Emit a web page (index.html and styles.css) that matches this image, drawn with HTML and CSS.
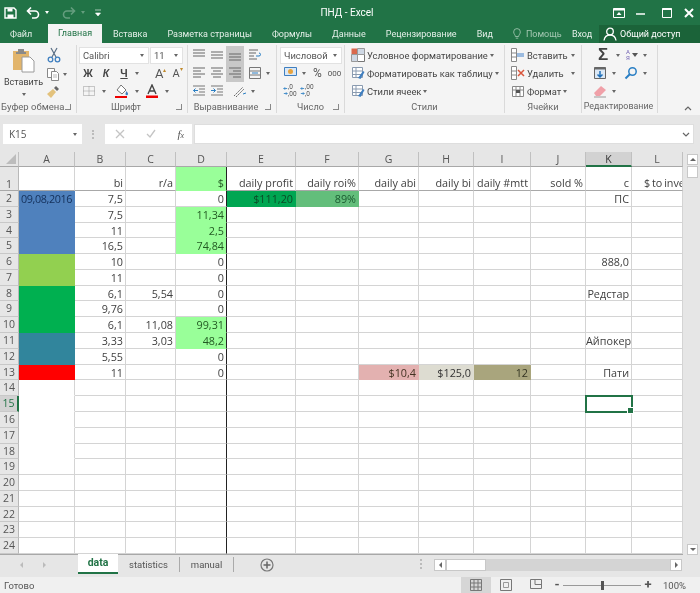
FILE: index.html
```html
<!DOCTYPE html>
<html lang="ru">
<head>
<meta charset="utf-8">
<title>ПНД - Excel</title>
<link rel="stylesheet" href="styles.css">
</head>
<body>
<svg class="sprite" width="0" height="0">
  <symbol id="al-t" viewBox="0 0 14 14"><path d="M1 2h12M1 5h12M1 8h12" stroke="#666"/></symbol>
  <symbol id="al-m" viewBox="0 0 14 14"><path d="M1 4h12M1 7h12M1 10h12" stroke="#666"/></symbol>
  <symbol id="al-b" viewBox="0 0 14 14"><path d="M1 6h12M1 9h12M1 12h12" stroke="#666"/></symbol>
  <symbol id="al-l" viewBox="0 0 14 14"><path d="M1 2h12M1 5h8M1 8h12M1 11h8" stroke="#666"/></symbol>
  <symbol id="al-c" viewBox="0 0 14 14"><path d="M1 2h12M3 5h8M1 8h12M3 11h8" stroke="#666"/></symbol>
  <symbol id="al-r" viewBox="0 0 14 14"><path d="M1 2h12M5 5h8M1 8h12M5 11h8" stroke="#666"/></symbol>
  <symbol id="ind" viewBox="0 0 14 14"><path d="M1 2h12M7 5h6M7 8h6M1 11h12" stroke="#777"/><path d="M6 6.500H1.500M3.500 4.500l-2 2 2 2" stroke="#2a7fc4" fill="none"/></symbol>
  <symbol id="out" viewBox="0 0 14 14"><path d="M1 2h12M7 5h6M7 8h6M1 11h12" stroke="#777"/><path d="M1 6.500h4.500M3.500 4.500l2 2-2 2" stroke="#2a7fc4" fill="none"/></symbol>
  <symbol id="brush" viewBox="0 0 14 14"><path d="M1.500 1.500h10v10h-10zM1.500 5h10M1.500 8.500h10M5 1.500v10" fill="#fff" stroke="#8a9bb0"/><path d="M7 12l5-7 1.500 1-4 7z" fill="#3f7fc0"/></symbol>
  <symbol id="decarrow" viewBox="0 0 6 12"><path d="M5 3H1M2.500 1.500 1 3l1.500 1.500M1 9h4M3.500 7.500 5 9l-1.500 1.500" fill="none" stroke="#2a7fc4"/></symbol>
</svg>
<div class="app">
  <header class="title">
    <div class="qat">
      <svg class="ic16" viewBox="0 0 16 16"><path d="M3 3h9l2 2v8H3z" fill="none" stroke="#fff" stroke-width="1.400"/><path d="M5.500 3.500h5v3h-5zM5.500 9.500h6V13h-6z" fill="#fff"/></svg>
      <svg class="ic16" viewBox="0 0 16 16"><path d="M3 6h7a3.500 3.500 0 0 1 0 7H7M6 2.500 2.500 6 6 9.500" fill="none" stroke="#fff" stroke-width="1.600"/></svg>
      <span class="car w"></span>
      <svg class="ic16 dim" viewBox="0 0 16 16"><path d="M13 6H6a3.500 3.500 0 0 0 0 7h3M10 2.500 13.500 6 10 9.500" fill="none" stroke="#fff" stroke-width="1.600"/></svg>
      <span class="car w dim"></span>
      <svg class="qm" viewBox="0 0 8 8"><path d="M1 1h6M1.500 4h5L4 7z" fill="#fff" stroke="#fff" stroke-width=".6"/></svg>
    </div>
    <div class="doc">ПНД - Excel</div>
    <div class="win">
      <svg class="ic14" viewBox="0 0 14 14"><path d="M1.500 2.500h11v9h-11z" fill="none" stroke="#fff"/><path d="M1.500 2.500h11v2h-11zM7 6l2.500 3h-5z" fill="#fff"/></svg>
      <svg class="ic14" viewBox="0 0 14 14"><path d="M2 8h9" stroke="#fff" stroke-width="1.500"/></svg>
      <svg class="ic14" viewBox="0 0 14 14"><path d="M2.500 2.500h9v9h-9z" fill="none" stroke="#fff"/><path d="M2.500 3h9" stroke="#fff" stroke-width="2"/></svg>
      <svg class="ic14" viewBox="0 0 14 14"><path d="M3 3l8 8M11 3l-8 8" stroke="#fff" stroke-width="2"/></svg>
    </div>
  </header>

  <nav class="tabs">
    <span class="tab file">Файл</span>
    <span class="tab active">Главная</span>
    <span class="tab ins">Вставка</span>
    <span class="tab">Разметка страницы</span>
    <span class="tab">Формулы</span>
    <span class="tab">Данные</span>
    <span class="tab">Рецензирование</span>
    <span class="tab">Вид</span>
    <span class="tab help">
      <svg class="bulb" viewBox="0 0 12 14"><path d="M4 10c0-2-2-3-2-5.500a4 4 0 0 1 8 0C10 7 8 8 8 10zM4.500 12h3" fill="none" stroke="#a5c8b3"/></svg>
      Помощь
    </span>
    <span class="tab login">Вход</span>
    <span class="share">
      <svg class="ic14" viewBox="0 0 14 14"><circle cx="7" cy="4.500" r="3.300" fill="none" stroke="#fff" stroke-width="1.300"/><path d="M1 13.500c.5-3.500 3-5.500 6-5.500s5.500 2 6 5.500" fill="none" stroke="#fff" stroke-width="1.300"/></svg>
      Общий доступ
    </span>
  </nav>

  <section class="ribbon">
    <div class="grp g-clip">
      <div class="body clip">
        <div class="paste">
          <svg class="pasteic" viewBox="0 0 24 25"><path d="M1 3h16v19H1z" fill="#e2b56c"/><path d="M6 1h6v3h2v2H4V4h2z" fill="#8a8a8a"/><path d="M10 9h8l4 4v11H10z" fill="#fff" stroke="#9a9a9a"/></svg>
          <span class="pt">Вставить</span>
          <span class="car"></span>
        </div>
        <div class="clipcol">
          <svg class="ic16" viewBox="0 0 16 16"><path d="M5 1l5 9M11 1L6 10" stroke="#5a6f86" stroke-width="1.200"/><circle cx="4.500" cy="12.500" r="2.300" fill="none" stroke="#3f7fc0" stroke-width="1.300"/><circle cx="11.500" cy="12.500" r="2.300" fill="none" stroke="#3f7fc0" stroke-width="1.300"/></svg>
          <div class="it"><svg class="ic14" viewBox="0 0 14 14"><path d="M1.500 1.500h7v9h-7z" fill="#fff" stroke="#888"/><path d="M5.500 4.500h5l2 2v7h-7z" fill="#fff" stroke="#888"/><path d="M7 8h4M7 10h4" stroke="#bbb"/></svg><span class="car"></span></div>
          <svg class="ic14" viewBox="0 0 14 14"><path d="M1 9l6-5 3 3-5 6z" fill="#e3c27c"/><path d="M8 3l2-2 3 3-2 2z" fill="#666"/></svg>
        </div>
      </div>
      <div class="lab">Буфер обмена<span class="launch"></span></div>
    </div>

    <div class="grp g-font">
      <div class="body stack">
        <div class="tr">
          <span class="combo fname">Calibri<span class="car"></span></span>
          <span class="combo fsize">11<span class="car"></span></span>
        </div>
        <div class="tr t2">
          <b class="fb">Ж</b><b class="fb it2">К</b><b class="fb un">Ч</b><span class="car"></span>
          <span class="grow">A<sup>▴</sup></span><span class="shrink">A<sup>▾</sup></span>
        </div>
        <div class="tr t3">
          <svg class="ic14" viewBox="0 0 14 14"><path d="M1.500 2.500h11v9h-11zM7 2.500v9M1.500 7h11" fill="none" stroke="#999" stroke-dasharray="1 1"/></svg><span class="car"></span>
          <svg class="ic14 fill" viewBox="0 0 14 14"><path d="M6 1l5 5-4 4-5-4z" fill="#fff" stroke="#777"/><path d="M11.500 7c1 1.500 1.500 2 1.500 3a1.200 1.200 0 0 1-2.500 0c0-1 .5-1.500 1-3z" fill="#3f7fc0"/><path d="M0 12h12v2H0z" fill="#e00"/></svg><span class="car"></span>
          <svg class="ic14 fa" viewBox="0 0 14 14"><path d="M3 10 7 1l4 9M4.500 7h5" fill="none" stroke="#444" stroke-width="1.400"/><path d="M1 11.500h12V14H1z" fill="#e00"/></svg><span class="car"></span>
        </div>
      </div>
      <div class="lab pad">Шрифт<span class="launch"></span></div>
    </div>

    <div class="grp g-align">
      <div class="body stack">
        <div class="tr ar">
          <span class="ab"><svg class="ic14"><use href="#al-t"/></svg></span>
          <span class="ab"><svg class="ic14"><use href="#al-m"/></svg></span>
          <span class="ab on"><svg class="ic14"><use href="#al-b"/></svg></span>
          <span class="ab wr"><svg class="ic14" viewBox="0 0 14 14"><path d="M1 2h9M1 5h7M1 8h5M1 11h8" stroke="#666"/><path d="M8 8h3a1.500 1.500 0 0 0 0-3" fill="none" stroke="#2a7fc4"/></svg></span>
        </div>
        <div class="tr ar">
          <span class="ab"><svg class="ic14"><use href="#al-l"/></svg></span>
          <span class="ab"><svg class="ic14"><use href="#al-c"/></svg></span>
          <span class="ab on"><svg class="ic14"><use href="#al-r"/></svg></span>
          <span class="ab wr"><svg class="ic14" viewBox="0 0 14 14"><path d="M1.500 1.500h11v11h-11zM1.500 5h11M1.500 9h11" fill="none" stroke="#777"/><path d="M4 7h6" stroke="#2a7fc4"/></svg></span><span class="car"></span>
        </div>
        <div class="tr ar">
          <span class="ab"><svg class="ic14"><use href="#ind"/></svg></span>
          <span class="ab"><svg class="ic14"><use href="#out"/></svg></span>
          <span class="ab orient"><svg class="ic14" viewBox="0 0 14 14"><path d="M1 12 10 3M3 13l8-8" stroke="#666" stroke-dasharray="2 1"/><path d="M10 10l3-1" stroke="#2a7fc4"/></svg></span><span class="car"></span>
        </div>
      </div>
      <div class="lab pad">Выравнивание<span class="launch"></span></div>
    </div>

    <div class="grp g-num">
      <div class="body stack">
        <div class="tr"><span class="combo fmt">Числовой<span class="car"></span></span></div>
        <div class="tr n2">
          <svg class="ic16" viewBox="0 0 16 16"><path d="M1.500 2.500h12v8h-12z" fill="#dbe8f5" stroke="#3f7fc0"/><circle cx="7.500" cy="6.500" r="2.500" fill="#e8a33d"/></svg><span class="car"></span>
          <span class="pct">%</span><span class="thou">000</span>
        </div>
        <div class="tr n3">
          <span class="dec"><svg class="da"><use href="#decarrow"/></svg><span class="dt">,0<br>,00</span></span>
          <span class="dec"><svg class="da"><use href="#decarrow"/></svg><span class="dt">,00<br>,0</span></span>
        </div>
      </div>
      <div class="lab">Число<span class="launch"></span></div>
    </div>

    <div class="grp g-sty">
      <div class="body stack">
        <div class="tr st"><svg class="ic14" viewBox="0 0 14 14"><path d="M.5.500h6v6h-6z" fill="#d9684c"/><path d="M6.500 6.500h7v7h-7z" fill="#fff" stroke="#777"/><path d="M.5 6.500h6v7h-6zM6.500.5h7v6h-7z" fill="#cfd8e4" stroke="#999"/></svg>Условное форматирование<span class="car"></span></div>
        <div class="tr st"><svg class="ic14"><use href="#brush"/></svg>Форматировать как таблицу<span class="car"></span></div>
        <div class="tr st"><svg class="ic14"><use href="#brush"/></svg>Стили ячеек<span class="car"></span></div>
      </div>
      <div class="lab">Стили</div>
    </div>

    <div class="grp g-cell">
      <div class="body stack">
        <div class="tr st"><svg class="ic14" viewBox="0 0 14 14"><path d="M.5.500h5v13h-5zM.5 5h5M.5 9h5" fill="#fff" stroke="#888"/><path d="M6 5h7v4H6z" fill="#9bbbe0"/></svg>Вставить<span class="car far"></span></div>
        <div class="tr st"><svg class="ic14" viewBox="0 0 14 14"><path d="M.5.500h5v13h-5zM.5 5h5M.5 9h5" fill="#fff" stroke="#888"/><path d="M7 4l6 6M13 4l-6 6" stroke="#d9553b" stroke-width="1.500"/></svg>Удалить<span class="car far"></span></div>
        <div class="tr st"><svg class="ic14" viewBox="0 0 14 14"><path d="M1.500 2.500h11v10h-11zM1.500 6h11M5 2.500v10M9 2.500v10" fill="#fff" stroke="#888"/><path d="M5 6h4v3H5z" fill="#555"/></svg>Формат<span class="car"></span></div>
      </div>
      <div class="lab">Ячейки</div>
    </div>

    <div class="grp g-edit">
      <div class="body stack">
        <div class="tr ed"><span class="sig">Σ</span><span class="car"></span><span class="az">А<br>Я</span><svg class="sort" viewBox="0 0 6 4"><path d="M0 0h6L3 4z" fill="#555"/></svg><span class="car"></span></div>
        <div class="tr ed"><svg class="ic14" viewBox="0 0 14 14"><path d="M1.500 1.500h11v11h-11z" fill="#dbe8f5" stroke="#666"/><path d="M1.500 1.500h11v2h-11z" fill="#666"/><path d="M7 5v6M4.500 8.500 7 11l2.500-2.500" fill="none" stroke="#1f6fb8" stroke-width="1.500"/></svg><span class="car"></span><svg class="ic14 find" viewBox="0 0 14 14"><circle cx="8.500" cy="5.500" r="3.700" fill="none" stroke="#2a7fc4" stroke-width="1.500"/><path d="M6 8l-4.500 4.500" stroke="#2a7fc4" stroke-width="2"/></svg><span class="car"></span></div>
        <div class="tr ed"><svg class="ic14" viewBox="0 0 14 14"><path d="M1 9l7-7 5 4-6 6H3z" fill="#f0a0a8"/><path d="M1 13h12" stroke="#999"/></svg><span class="car"></span></div>
      </div>
      <div class="lab tight">Редактирование</div>
    </div>

    <div class="collapse"><svg class="ch8" viewBox="0 0 8 5"><path d="M1 4l3-3 3 3" fill="none" stroke="#666" stroke-width="1.200"/></svg></div>
  </section>

  <section class="fbar">
    <div class="namebox">K15<span class="car"></span></div>
    <div class="dots"></div>
    <div class="fbtns">
      <svg class="ic10" viewBox="0 0 10 10"><path d="M1 1l8 8M9 1 1 9" stroke="#c4c4c4" stroke-width="1.300"/></svg>
      <svg class="ic10" viewBox="0 0 10 10"><path d="M1 5l3 3 5-7" fill="none" stroke="#c4c4c4" stroke-width="1.300"/></svg>
      <i class="fx">f<small>x</small></i>
    </div>
    <div class="finput"><svg class="ch8" viewBox="0 0 8 5"><path d="M1 1l3 3 3-3" fill="none" stroke="#666" stroke-width="1.200"/></svg></div>
  </section>

  <section class="sheetwrap">
    <div class="sheet">
      <div class="row heads"><div class="corner"><span class="tri"></span></div><div class="ch">A</div><div class="ch">B</div><div class="ch">C</div><div class="ch">D</div><div class="ch">E</div><div class="ch">F</div><div class="ch">G</div><div class="ch">H</div><div class="ch">I</div><div class="ch">J</div><div class="ch on">K</div><div class="ch">L</div></div>
      <div class="row r1"><div class="rh">1</div><div class="c"></div><div class="c">bi</div><div class="c">r/a</div><div class="c d gr">$</div><div class="c">daily profit</div><div class="c">daily roi%</div><div class="c">daily abi</div><div class="c">daily bi</div><div class="c">daily #mtt</div><div class="c">sold %</div><div class="c">с</div><div class="c lft">$ to invest</div></div>
      <div class="row"><div class="rh">2</div><div class="c blue ctr">09,08,2016</div><div class="c">7,5</div><div class="c"></div><div class="c d">0</div><div class="c e2">$111,20</div><div class="c f2">89%</div><div class="c"></div><div class="c"></div><div class="c"></div><div class="c"></div><div class="c">ПС</div><div class="c"></div></div>
      <div class="row"><div class="rh">3</div><div class="c blue"></div><div class="c">7,5</div><div class="c"></div><div class="c d gr">11,34</div><div class="c"></div><div class="c"></div><div class="c"></div><div class="c"></div><div class="c"></div><div class="c"></div><div class="c"></div><div class="c"></div></div>
      <div class="row"><div class="rh">4</div><div class="c blue"></div><div class="c">11</div><div class="c"></div><div class="c d gr">2,5</div><div class="c"></div><div class="c"></div><div class="c"></div><div class="c"></div><div class="c"></div><div class="c"></div><div class="c"></div><div class="c"></div></div>
      <div class="row"><div class="rh">5</div><div class="c blue"></div><div class="c">16,5</div><div class="c"></div><div class="c d gr">74,84</div><div class="c"></div><div class="c"></div><div class="c"></div><div class="c"></div><div class="c"></div><div class="c"></div><div class="c"></div><div class="c"></div></div>
      <div class="row"><div class="rh">6</div><div class="c lime"></div><div class="c">10</div><div class="c"></div><div class="c d">0</div><div class="c"></div><div class="c"></div><div class="c"></div><div class="c"></div><div class="c"></div><div class="c"></div><div class="c">888,0</div><div class="c"></div></div>
      <div class="row"><div class="rh">7</div><div class="c lime"></div><div class="c">11</div><div class="c"></div><div class="c d">0</div><div class="c"></div><div class="c"></div><div class="c"></div><div class="c"></div><div class="c"></div><div class="c"></div><div class="c"></div><div class="c"></div></div>
      <div class="row"><div class="rh">8</div><div class="c green"></div><div class="c">6,1</div><div class="c">5,54</div><div class="c d">0</div><div class="c"></div><div class="c"></div><div class="c"></div><div class="c"></div><div class="c"></div><div class="c"></div><div class="c">Редстар</div><div class="c"></div></div>
      <div class="row"><div class="rh">9</div><div class="c green"></div><div class="c">9,76</div><div class="c"></div><div class="c d">0</div><div class="c"></div><div class="c"></div><div class="c"></div><div class="c"></div><div class="c"></div><div class="c"></div><div class="c"></div><div class="c"></div></div>
      <div class="row"><div class="rh">10</div><div class="c green"></div><div class="c">6,1</div><div class="c">11,08</div><div class="c d gr">99,31</div><div class="c"></div><div class="c"></div><div class="c"></div><div class="c"></div><div class="c"></div><div class="c"></div><div class="c"></div><div class="c"></div></div>
      <div class="row"><div class="rh">11</div><div class="c teal"></div><div class="c">3,33</div><div class="c">3,03</div><div class="c d gr">48,2</div><div class="c"></div><div class="c"></div><div class="c"></div><div class="c"></div><div class="c"></div><div class="c"></div><div class="c">Айпокер</div><div class="c"></div></div>
      <div class="row"><div class="rh">12</div><div class="c teal"></div><div class="c">5,55</div><div class="c"></div><div class="c d">0</div><div class="c"></div><div class="c"></div><div class="c"></div><div class="c"></div><div class="c"></div><div class="c"></div><div class="c"></div><div class="c"></div></div>
      <div class="row"><div class="rh">13</div><div class="c red"></div><div class="c">11</div><div class="c"></div><div class="c d">0</div><div class="c"></div><div class="c"></div><div class="c g13">$10,4</div><div class="c h13">$125,0</div><div class="c i13">12</div><div class="c"></div><div class="c">Пати</div><div class="c"></div></div>
      <div class="row"><div class="rh">14</div><div class="c nb"></div><div class="c"></div><div class="c"></div><div class="c d"></div><div class="c"></div><div class="c"></div><div class="c"></div><div class="c"></div><div class="c"></div><div class="c"></div><div class="c"></div><div class="c"></div></div>
      <div class="row"><div class="rh on">15</div><div class="c nb"></div><div class="c"></div><div class="c"></div><div class="c d"></div><div class="c"></div><div class="c"></div><div class="c"></div><div class="c"></div><div class="c"></div><div class="c"></div><div class="c sel"></div><div class="c"></div></div>
      <div class="row"><div class="rh">16</div><div class="c nb"></div><div class="c"></div><div class="c"></div><div class="c d"></div><div class="c"></div><div class="c"></div><div class="c"></div><div class="c"></div><div class="c"></div><div class="c"></div><div class="c"></div><div class="c"></div></div>
      <div class="row"><div class="rh">17</div><div class="c nb"></div><div class="c"></div><div class="c"></div><div class="c d"></div><div class="c"></div><div class="c"></div><div class="c"></div><div class="c"></div><div class="c"></div><div class="c"></div><div class="c"></div><div class="c"></div></div>
      <div class="row"><div class="rh">18</div><div class="c nb"></div><div class="c"></div><div class="c"></div><div class="c d"></div><div class="c"></div><div class="c"></div><div class="c"></div><div class="c"></div><div class="c"></div><div class="c"></div><div class="c"></div><div class="c"></div></div>
      <div class="row"><div class="rh">19</div><div class="c"></div><div class="c"></div><div class="c"></div><div class="c d"></div><div class="c"></div><div class="c"></div><div class="c"></div><div class="c"></div><div class="c"></div><div class="c"></div><div class="c"></div><div class="c"></div></div>
      <div class="row"><div class="rh">20</div><div class="c"></div><div class="c"></div><div class="c"></div><div class="c d"></div><div class="c"></div><div class="c"></div><div class="c"></div><div class="c"></div><div class="c"></div><div class="c"></div><div class="c"></div><div class="c"></div></div>
      <div class="row"><div class="rh">21</div><div class="c"></div><div class="c"></div><div class="c"></div><div class="c d"></div><div class="c"></div><div class="c"></div><div class="c"></div><div class="c"></div><div class="c"></div><div class="c"></div><div class="c"></div><div class="c"></div></div>
      <div class="row"><div class="rh">22</div><div class="c"></div><div class="c"></div><div class="c"></div><div class="c d"></div><div class="c"></div><div class="c"></div><div class="c"></div><div class="c"></div><div class="c"></div><div class="c"></div><div class="c"></div><div class="c"></div></div>
      <div class="row"><div class="rh">23</div><div class="c"></div><div class="c"></div><div class="c"></div><div class="c d"></div><div class="c"></div><div class="c"></div><div class="c"></div><div class="c"></div><div class="c"></div><div class="c"></div><div class="c"></div><div class="c"></div></div>
      <div class="row"><div class="rh">24</div><div class="c"></div><div class="c"></div><div class="c"></div><div class="c d"></div><div class="c"></div><div class="c"></div><div class="c"></div><div class="c"></div><div class="c"></div><div class="c"></div><div class="c"></div><div class="c"></div></div>
    </div>
    <div class="vscroll">
      <span class="sbtn"><span class="up"></span></span>
      <span class="vthumb"></span>
      <span class="vtrack"></span>
      <span class="sbtn"><span class="dn"></span></span>
    </div>
  </section>

  <section class="sheets">
    <div class="nav"><span class="lt"></span><span class="rt"></span></div>
    <span class="stab cur">data</span>
    <span class="stab sep">statistics</span>
    <span class="stab sep">manual</span>
    <svg class="plus" viewBox="0 0 14 14"><circle cx="7" cy="7" r="6" fill="none" stroke="#777" stroke-width="1.200"/><path d="M7 3.500v7M3.500 7h7" stroke="#666" stroke-width="1.500"/></svg>
    <div class="hdots"></div>
    <div class="hscroll">
      <span class="hbtn"><span class="lt"></span></span>
      <span class="hthumb"></span>
      <span class="htrack"></span>
      <span class="hbtn"><span class="rt"></span></span>
    </div>
  </section>

  <footer class="status">
    <span class="ready">Готово</span>
    <div class="views">
      <span class="vbtn on"><svg class="ic14" viewBox="0 0 14 14"><path d="M1.500 1.500h11v11h-11zM1.500 5h11M1.500 9h11M5 1.500v11M9 1.500v11" fill="none" stroke="#777"/></svg></span>
      <span class="vbtn"><svg class="ic14" viewBox="0 0 14 14"><path d="M1.500 1.500h11v11h-11z" fill="none" stroke="#777"/><path d="M4.500 4.500h5v5h-5z" fill="none" stroke="#999"/></svg></span>
      <span class="vbtn"><svg class="ic14" viewBox="0 0 14 14"><path d="M1.500 1.500h11v9h-11zM6 1.500v5h6.500" fill="none" stroke="#777"/></svg></span>
    </div>
    <div class="zoom">
      <span class="zb">-</span>
      <span class="slider"><span class="knob"></span></span>
      <span class="zb">+</span>
      <span class="zp">100%</span>
    </div>
  </footer>
</div>
</body>
</html>
```

FILE: styles.css
```css
* { box-sizing: border-box; }
html, body { margin: 0; padding: 0; }
body { width: 700px; height: 593px; overflow: hidden; font-family: "Open Sans", "Noto Sans", sans-serif; background: #fff; }
.sprite { display: block; width: 0; height: 0; }
.app { display: flex; flex-direction: column; width: 700px; height: 593px; filter: blur(.3px); }

svg { display: block; flex: none; }
.ic16 { width: 16px; height: 16px; }
.ic14 { width: 14px; height: 14px; }
.ic10 { width: 10px; height: 10px; }
.ch8 { width: 8px; height: 5px; }

.car { flex: none; width: 0; height: 0; border-left: 2.5px solid transparent; border-right: 2.5px solid transparent; border-top: 3px solid #666; }
.car.w { border-top-color: #fff; }
.dim { opacity: .3; }

/* title bar */
.title { display: flex; align-items: center; height: 25px; background: #217346; color: #fff; flex: none; }
.qat { display: flex; align-items: center; width: 292px; padding-left: 2px; }
.qat .ic16:nth-child(2) { margin-left: 7px; }
.qat .car { margin-left: 4px; }
.qat .ic16:nth-child(4) { margin-left: 12px; }
.qm { width: 8px; height: 8px; margin-left: 9px; }
.doc { width: 110px; text-align: center; font: 10px "Roboto", sans-serif; }
.win { display: flex; align-items: center; margin-left: 210px; }
.win .ic14:nth-child(2) { margin-left: 8px; }
.win .ic14:nth-child(3) { margin-left: 12px; }
.win .ic14:nth-child(4) { margin-left: 8px; }

/* tabs */
.tabs { display: flex; align-items: stretch; height: 18px; background: #217346; color: #e4efe8; font: 9px/18px "Roboto", sans-serif; flex: none; white-space: nowrap; }
.tab { flex: none; padding: 0 10px; }
.tab.file { padding: 0 0 0 10px; width: 48px; }
.tab.active { background: #f4f4f4; color: #217346; width: 54px; padding: 0; text-align: center; margin-top: -1px; height: 19px; }
.tab.ins { margin-left: 1px; }
.tab.help { display: flex; align-items: center; gap: 4px; color: #a5c8b3; width: 60px; padding: 0 0 0 9px; overflow: hidden; }
.bulb { width: 10px; height: 12px; }
.tab.login { padding: 0 7px 0 9px; }
.share { display: flex; align-items: center; gap: 3px; flex: 1; background: #1b6339; color: #fff; padding-left: 4px; overflow: hidden; }

/* ribbon */
.ribbon { display: flex; height: 72px; background: #f4f4f4; flex: none; color: #444; font: 9.400px "Roboto", "Noto Sans", sans-serif; }
.grp { display: flex; flex-direction: column; border-right: 1px solid #dadada; margin: 2px 0; flex: none; }
.body { height: 55px; }
.lab { height: 13px; line-height: 13px; text-align: center; font-size: 9.200px; color: #666; position: relative; white-space: nowrap; }
.lab.pad { padding-right: 12px; }
.lab.tight { font-size: 8.900px; padding-right: 2px; }
.launch { position: absolute; right: 5px; top: 4px; width: 6px; height: 6px; border-right: 1px solid #888; border-bottom: 1px solid #888; }
.g-clip { width: 77px; }
.g-font { width: 111px; }
.g-align { width: 89px; }
.g-num { width: 68px; }
.g-sty { width: 160px; }
.g-cell { width: 77px; }
.g-edit { width: 76px; }
.g-clip .lab { text-align: left; padding-left: 1px; font-size: 9.500px; }

.clip { display: flex; }
.paste { display: flex; flex-direction: column; align-items: center; width: 46px; padding: 3px 0 0 1px; }
.pasteic { width: 24px; height: 25px; }
.pt { font-size: 9px; line-height: 12px; margin-top: 3px; white-space: nowrap; }
.paste .car { margin-top: 5px; }
.clipcol { display: flex; flex-direction: column; gap: 4px; padding-top: 2px; }
.it { display: flex; align-items: center; gap: 3px; }

.stack { display: flex; flex-direction: column; padding-top: 1px; }
.tr { display: flex; align-items: center; height: 18px; flex: none; }
.combo { display: flex; align-items: center; justify-content: space-between; height: 17px; background: #fff; border: 1px solid #e2e2e2; padding: 0 4px 0 3px; color: #555; }
.fname { width: 70px; margin-left: 2px; }
.fsize { width: 33px; margin-left: 1px; }
.fmt { width: 62px; margin-left: 3px; }

.t2 { padding-left: 2px; }
.fb { width: 18px; text-align: center; font-size: 10.500px; color: #444; font-family: "Liberation Sans", sans-serif; }
.it2 { font-style: italic; }
.un { text-decoration: underline; }
.t2 .car { margin-left: 2px; }
.grow { margin-left: 16px; font-size: 13px; color: #555; }
.shrink { margin-left: 6px; font-size: 11px; color: #555; }
.grow sup, .shrink sup { font-size: 6px; vertical-align: 6px; line-height: 0; color: #c08a2d; }
.t3 { padding-left: 5px; }
.t3 .car { margin: 0 6px 0 6px; }
.t3 .fill { margin-left: 3px; }

.ar { padding-left: 2px; }
.ab { display: flex; align-items: center; justify-content: center; width: 18px; height: 18px; }
.ab.on { background: #c8c8c8; }
.ab.wr { margin-left: 2px; }
.ab.orient { margin-left: 5px; }
.ar .car { margin-left: 2px; }

.n2 { padding-left: 6px; }
.n2 .car { margin-left: 3px; }
.pct { margin-left: 7px; font-size: 12px; color: #555; }
.thou { margin-left: 6px; font-size: 8px; color: #555; }
.n3 { padding-left: 6px; gap: 3px; }
.dec { display: flex; align-items: center; width: 14px; }
.da { width: 5px; height: 14px; }
.dt { font-size: 6.500px; line-height: 7px; color: #555; }

.st { padding-left: 6px; gap: 2px; white-space: nowrap; color: #444; }
.g-cell .st { padding-right: 6px; }
.far { margin-left: auto; }
.ed { padding-left: 11px; gap: 5px; }
.sig { width: 16px; font: bold 17px/18px "Liberation Sans", sans-serif; color: #444; text-align: center; margin-left: 2px; }
.az { font-size: 6px; line-height: 6px; color: #7464b5; width: 5px; margin-left: 1px; }
.sort { width: 6px; height: 4px; margin-left: -4px; }
.ed .find { margin-left: 3px; }
.collapse { display: flex; align-items: flex-end; padding: 0 8px 4px 26px; }

/* formula bar */
.fbar { display: flex; align-items: center; height: 37px; background: #e6e6e6; padding: 1px 6px 0 3px; flex: none; }
.namebox { display: flex; align-items: center; justify-content: space-between; width: 79px; height: 20px; background: #fff; padding: 0 5px 0 6px; font-size: 10px; color: #555; }
.dots { width: 3px; height: 9px; margin: 0 10px 0 10px; border-left: 2px dotted #bbb; }
.fbtns { display: flex; align-items: center; justify-content: space-between; width: 87px; height: 20px; background: #fff; padding: 0 8px 0 10px; }
.fx { font: italic 11px "Liberation Serif", serif; color: #555; }
.fx small { font-size: 8px; }
.finput { display: flex; align-items: center; justify-content: flex-end; flex: 1; height: 20px; background: #fff; margin-left: 2px; padding-right: 3px; border: 1px solid #dedede; }

/* sheet */
.sheetwrap { display: flex; height: 403px; flex: none; }
.sheet { width: 683px; background: #fff; border-bottom: 1px solid #a8a8a8; }
.row { display: grid; grid-template-columns: 19px 56px 51px 50px 51px 69px 63px 60px 55px 57px 55px 46px 51px; grid-template-rows: 100%; height: 15.790px; }
.row.heads { height: 15px; }
.row.r1 { height: 24px; }
.corner { position: relative; background: #e6e6e6; border-right: 1px solid #c0c0c0; border-bottom: 1px solid #a8a8a8; }
.tri { position: absolute; right: 2px; bottom: 2px; width: 0; height: 0; border-left: 10px solid transparent; border-bottom: 10px solid #bcbcbc; }
.ch { background: #e6e6e6; color: #555; text-align: center; font: 10.500px/14px "Open Sans", sans-serif; border-right: 1px solid #c0c0c0; border-bottom: 1px solid #a8a8a8; }
.ch.on { background: #d2d2d2; border-bottom: 2px solid #217346; color: #333; }
.rh { background: #e6e6e6; color: #555; text-align: center; font: 10.500px/15px "Open Sans", sans-serif; border-right: 1px solid #b8b8b8; border-bottom: 1px solid #c8c8c8; }
.rh.on { background: #d2d2d2; border-right: 2px solid #217346; color: #217346; }
.r1 .rh { line-height: 34px; border-bottom-color: #a8a8a8; }
.c { position: relative; border-right: 1px solid #d4d4d4; border-bottom: 1px solid #d4d4d4; text-align: right; padding-right: 2px; font: 10.800px/15px "Open Sans", sans-serif; color: #404040; white-space: nowrap; overflow: hidden; }
.r1 .c { padding-top: 8px; border-bottom: 1px solid #a8a8a8; }
.c.d { border-right: 1px solid #222; }
.c.lft { text-align: left; padding-left: 12px; padding-right: 0; word-spacing: -1px; }
.c.ctr { text-align: center; padding: 0; color: #14305a; letter-spacing: -.4px; }
.c.gr { background: #99ff99; border-bottom-color: #99ff99; color: #235a23; }
.c.blue { background: #4f81bd; border-color: #4f81bd; }
.c.lime { background: #92d050; border-color: #92d050; }
.c.green { background: #00b050; border-color: #00b050; }
.c.teal { background: #31859c; border-color: #31859c; }
.c.red { background: #f00; border-color: #f00; }
.c.e2 { background: #00a652; border-color: #00a652; color: #0b4a26; }
.c.f2 { background: #63be7b; border-color: #63be7b; color: #1a5a30; }
.c.g13 { background: #e3b1b0; border-color: #e3b1b0; color: #432; }
.c.h13 { background: #dddcd1; border-color: #dddcd1; color: #333; }
.c.i13 { background: #a9a57d; border-color: #a9a57d; color: #332; }
.c.nb { border-bottom-color: #fff; }
.c.sel { overflow: visible; z-index: 1; }
.c.sel::before { content: ""; position: absolute; left: -1px; top: -1px; right: -2px; bottom: -2px; border: 2px solid #217346; }
.c.sel::after { content: ""; position: absolute; right: -3px; bottom: -3px; width: 5px; height: 5px; background: #217346; border: 1px solid #fff; }

/* scrollbars */
.vscroll { display: flex; flex-direction: column; align-items: center; width: 17px; background: #e6e6e6; padding: 2px 0 0 2px; }
.sbtn { display: flex; align-items: center; justify-content: center; width: 11px; height: 11px; background: #fff; border: 1px solid #c8c8c8; flex: none; }
.vthumb { width: 11px; height: 12px; background: #fff; border: 1px solid #c8c8c8; margin-top: 1px; flex: none; }
.vtrack { flex: 1; width: 11px; }
.up { width: 0; height: 0; border-left: 3px solid transparent; border-right: 3px solid transparent; border-bottom: 3px solid #666; }
.dn { width: 0; height: 0; border-left: 3px solid transparent; border-right: 3px solid transparent; border-top: 3px solid #666; }
.lt { display: block; width: 0; height: 0; border-top: 3px solid transparent; border-bottom: 3px solid transparent; border-right: 3px solid #666; }
.rt { display: block; width: 0; height: 0; border-top: 3px solid transparent; border-bottom: 3px solid transparent; border-left: 3px solid #666; }

/* sheet tabs */
.sheets { display: flex; align-items: flex-start; height: 22px; background: #e6e6e6; flex: none; font-family: "Roboto", sans-serif; }
.nav { display: flex; align-items: center; gap: 20px; width: 78px; height: 20px; padding-left: 20px; }
.nav span { border-right-color: #bbb; border-left-color: #bbb; }
.stab { height: 19px; line-height: 18px; font-size: 9.500px; color: #555; padding: 0 11px; white-space: nowrap; }
.stab.cur { background: #fff; color: #217346; font-size: 10.500px; font-weight: 700; border-bottom: 2px solid #217346; width: 40px; padding: 0; text-align: center; height: 20px; margin-top: -1px; }
.stab.sep { border-right: 1px solid #aaa; height: 15px; line-height: 15px; margin-top: 2px; }
.plus { width: 14px; height: 14px; margin: 3px 0 0 26px; }
.hdots { width: 3px; height: 10px; margin: 4px 0 0 146px; border-left: 2px dotted #bbb; }
.hscroll { display: flex; align-items: center; width: 248px; height: 12px; margin: 4px 0 0 11px; background: #d4d4d4; }
.hbtn { display: flex; align-items: center; justify-content: center; width: 12px; height: 12px; background: #fff; border: 1px solid #c8c8c8; flex: none; }
.hthumb { width: 40px; height: 12px; background: #fff; border: 1px solid #c8c8c8; flex: none; }
.htrack { flex: 1; }

/* status */
.status { display: flex; align-items: center; height: 16px; background: #f0f0f0; font: 9.500px "Roboto", sans-serif; color: #555; flex: none; padding-left: 4px; }
.ready { width: 457px; }
.views { display: flex; align-items: center; }
.vbtn { display: flex; align-items: center; justify-content: center; width: 30px; height: 16px; }
.vbtn.on { background: #d6d6d6; }
.zoom { display: flex; align-items: center; margin-left: 2px; }
.zb { width: 8px; text-align: center; font-size: 13px; line-height: 16px; font-weight: 700; color: #555; }
.slider { position: relative; display: block; width: 78px; height: 1px; background: #999; margin: 0 3px 0 2px; }
.knob { position: absolute; left: 38px; top: -4px; width: 3px; height: 9px; background: #555; }
.zp { margin-left: 11px; font-size: 9.500px; }
```
